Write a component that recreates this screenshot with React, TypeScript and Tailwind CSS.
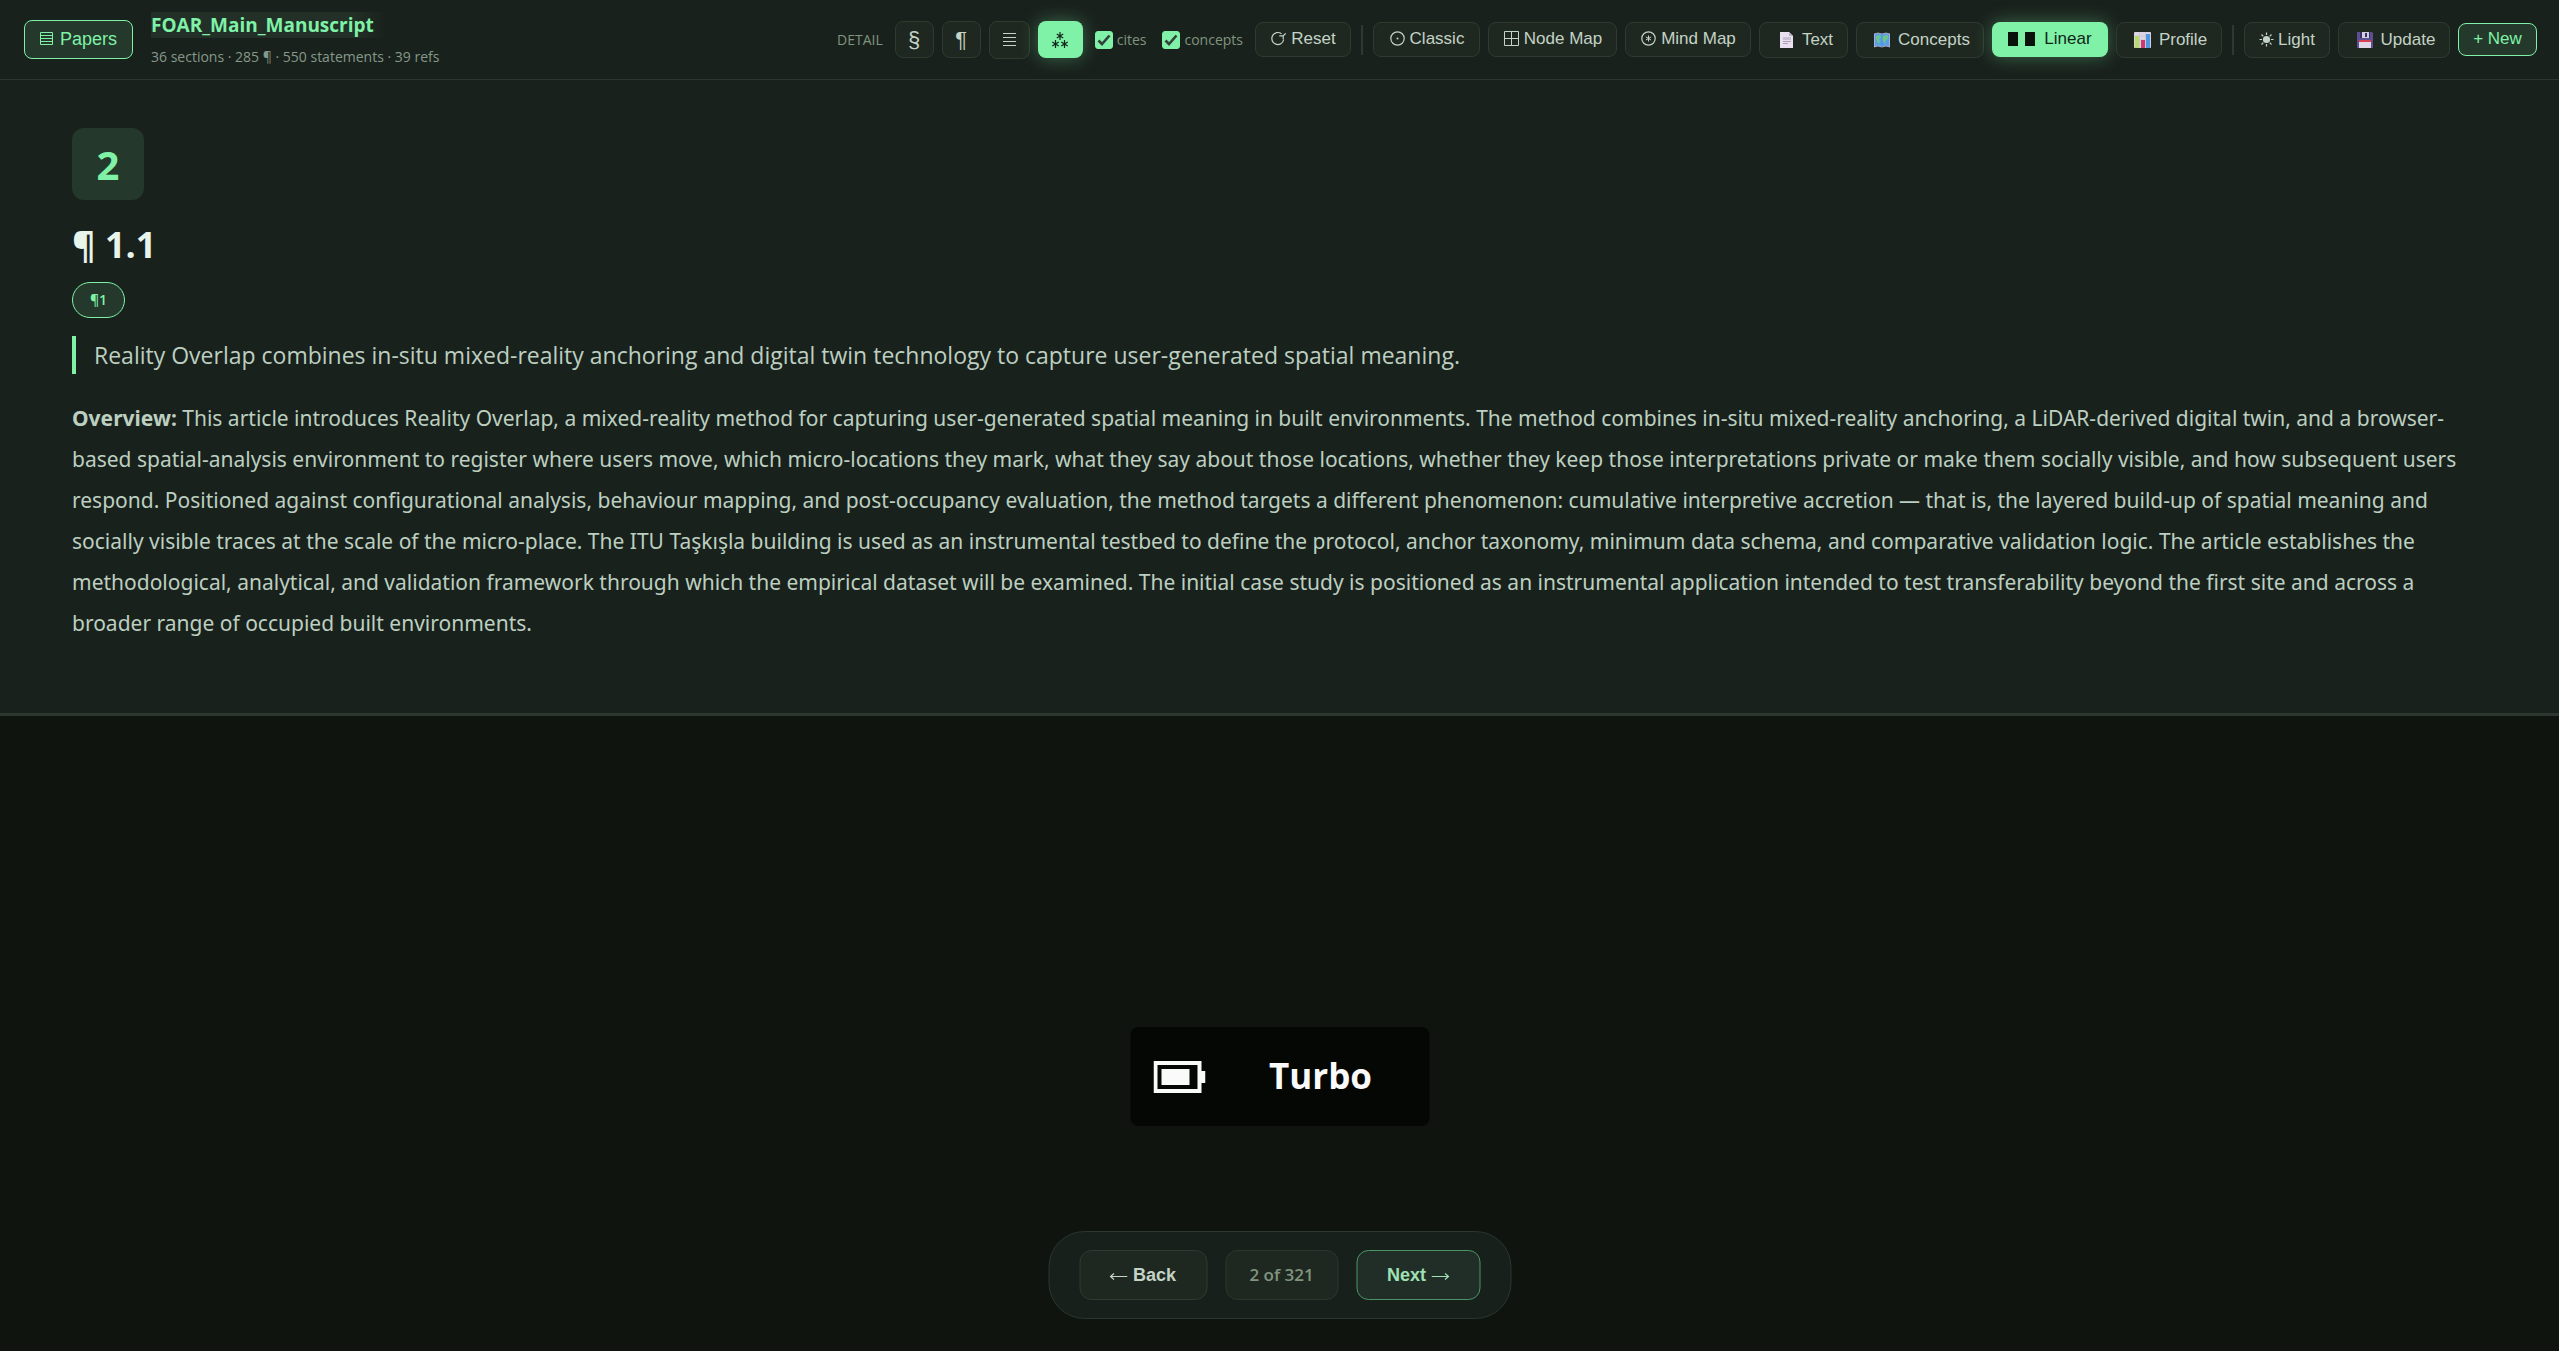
import type { ReactNode } from "react"

const FONT = "font-['Open_Sans','Noto_Sans',sans-serif]"
const ARIAL = "font-['Liberation_Sans',Arial,'DejaVu_Sans',sans-serif]"

const tool = `${ARIAL} flex shrink-0 items-center justify-center rounded-lg border border-[#2e3b31] bg-[#1f2820] text-[#c3d3c6] text-[17px] leading-5 whitespace-nowrap`

function Divider() {
    return <div className="mx-[2px] h-[30px] w-[2px] bg-[#2c3a31]" />
}

const RefreshIcon = () => (
    <svg width="17" height="17" viewBox="0 0 17 17" fill="none" stroke="currentColor" strokeWidth="1.2">
        <path d="M11.5 3.8A6 6 0 1 0 13.7 9.5" />
        <path d="M9.3 5.8H13.2V9.2M13.2 5.8L15.8 3.4" />
    </svg>
)

const ClassicIcon = () => (
    <svg width="17" height="17" viewBox="0 0 17 17" fill="none" stroke="currentColor" strokeWidth="1.2">
        <circle cx="8.5" cy="8.5" r="6.7" />
        <circle cx="8.5" cy="8.5" r="1" fill="currentColor" stroke="none" />
    </svg>
)

const GridIcon = () => (
    <svg width="17" height="17" viewBox="0 0 17 17" fill="none" stroke="currentColor" strokeWidth="1">
        <path d="M1.5 1.5H15.5V15.5H1.5ZM8.5 1.5V15.5M1.5 8.5H15.5" />
    </svg>
)

const MindIcon = () => (
    <svg width="17" height="17" viewBox="0 0 17 17" fill="none" stroke="currentColor" strokeWidth="1.2">
        <circle cx="8.5" cy="8.5" r="6.7" />
        <path d="M8.5 5.5V11.5M5.9 7L11.1 10M11.1 7L5.9 10" strokeWidth="1" />
    </svg>
)

const PageIcon = () => (
    <svg width="24" height="18" viewBox="-2 0 24 18">
        <path d="M4 1H13L17 5V17H4Z" fill="#e9e0f0" />
        <path d="M13 1L17 5H13Z" fill="#b9b0c4" />
        <path d="M7 6H15V9H7Z" fill="#c9c1d1" />
        <path d="M7 10.5H15M7 12.5H12" stroke="#a9a1b3" />
    </svg>
)

const MapIcon = () => (
    <svg width="24" height="18" viewBox="-2 0 24 18">
        <path d="M2 3L6 2L10 3L14 2L18 3V16L14 15L10 16L6 15L2 16Z" fill="#5b9fe6" />
        <path d="M2.5 3V16M17.5 3V16M2 3L6 2L10 3L14 2L18 3M2 16L6 15L10 16L14 15L18 16" fill="none" stroke="#b9b6d6" strokeWidth=".8" />
        <path d="M4 5L8 4L9 6L7 8L8 10L7 13L5 10L4 8ZM11 5L16 4L16 8L14 9L13 13L11 10L10 7Z" fill="#6cc58c" />
        <path d="M10 3V16" stroke="#2f6fb8" strokeOpacity=".4" strokeWidth=".7" />
    </svg>
)

const ChartIcon = () => (
    <svg width="24" height="18" viewBox="-2 0 24 18">
        <rect x="1" y="1" width="17" height="16" rx="1" fill="#dcd5e3" />
        <path d="M1 5H18M1 9H18M1 13H18M6.5 1V17M12.5 1V17" stroke="#c3bccc" strokeWidth=".6" />
        <rect x="2" y="5" width="4" height="12" fill="#b5dd64" />
        <rect x="8" y="9" width="4" height="8" fill="#d0396f" />
        <rect x="13" y="3" width="4" height="14" fill="#4f97e0" />
    </svg>
)

const SaveIcon = () => (
    <svg width="24" height="18" viewBox="-2 0 24 18">
        <path d="M2 1H17L18 2V17H2Z" fill="#5d4f94" />
        <rect x="5" y="1" width="10" height="6" fill="#3b3160" />
        <rect x="7" y="1" width="7" height="6" fill="#d5cee2" />
        <rect x="10" y="2" width="2" height="4" fill="#3b3160" />
        <rect x="4" y="9" width="12" height="8" fill="#e0d8e8" />
        <rect x="4" y="9" width="12" height="2" fill="#d8404f" />
    </svg>
)

const SunIcon = () => (
    <svg width="15" height="15" viewBox="0 0 15 15" stroke="currentColor" strokeWidth="1.2">
        <circle cx="7.5" cy="7.5" r="3.6" fill="currentColor" stroke="none" />
        <path d="M7.5 .5V3M7.5 12V14.5M.5 7.5H3M12 7.5H14.5M2.5 2.5L4.3 4.3M10.7 10.7L12.5 12.5M12.5 2.5L10.7 4.3M4.3 10.7L2.5 12.5" />
    </svg>
)

const BarsIcon = () => (
    <svg width="28" height="14" viewBox="0 0 28 14" fill="#09130c">
        <path d="M0 0H10V14H0ZM17 0H27V14H17Z" />
    </svg>
)

const LinesIcon = () => (
    <svg width="13" height="13" viewBox="0 0 13 13" stroke="currentColor">
        <path d="M0 .5H13M0 4.5H13M0 8.5H13M0 12.5H13" />
    </svg>
)

const AsterismIcon = () => (
    <svg width="18" height="18" viewBox="0 0 18 18" fill="none" stroke="currentColor" strokeWidth="1.2">
        {[[9, 5], [4.5, 13], [13.5, 13]].map(([x, y]) => (
            <path key={x} d={`M${x} ${y - 4}V${y + 4}M${x - 3.2} ${y - 2}L${x + 3.2} ${y + 2}M${x + 3.2} ${y - 2}L${x - 3.2} ${y + 2}`} />
        ))}
    </svg>
)

const PapersIcon = () => (
    <svg width="13" height="13" viewBox="0 0 13 13" fill="none" stroke="currentColor">
        <path d="M.5 .5H12.5V12.5H.5ZM.5 3.5H12.5M.5 6.5H12.5M.5 9.5H12.5" />
    </svg>
)

const BatteryIcon = () => (
    <svg width="52" height="32" viewBox="0 0 52 32" fill="#fafafa">
        <path fillRule="evenodd" d="M0 0H48V10H52V22H48V32H0ZM4 4V28H44V4Z" />
        <rect x="8" y="8" width="28" height="16" />
    </svg>
)

const Arrow = ({ flip }: { flip?: boolean }) => (
    <svg width="18" height="9" viewBox="0 0 18 9" fill="none" stroke="currentColor" strokeWidth="1.2" className={flip ? "mt-[3px] rotate-180" : "mt-[3px]"}>
        <path d="M0 4.5H17M13.5 1.5L17 4.5L13.5 7.5" />
    </svg>
)

function Toggle({ label }: { label: string }) {
    return (
        <label className="flex items-center gap-1 text-sm text-[#80947f]">
            <span className="grid">
                <input type="checkbox" defaultChecked className="peer col-start-1 row-start-1 h-[18px] w-[18px] appearance-none rounded-[3px] border border-[#80947f] checked:border-[#7ff2a7] checked:bg-[#7ff2a7]" />
                <svg width="14" height="14" viewBox="0 0 14 14" fill="none" stroke="#34423a" strokeWidth="2.6" className="pointer-events-none invisible col-start-1 row-start-1 place-self-center peer-checked:visible">
                    <path d="M1.5 7.5L5 11L12.5 2.5" />
                </svg>
            </span>
            {label}
        </label>
    )
}

function ToolButton({ icon, children, className }: { icon: ReactNode, children: ReactNode, className: string }) {
    return (
        <button type="button" className={`${tool} gap-1 ${className}`}>
            {icon}
            <span>{children}</span>
        </button>
    )
}

export default function App() {
    return (
        <div className={`${FONT} relative flex min-h-screen flex-col bg-[#0f140f]`}>
            <header className="flex h-20 items-center border-b border-[#2b372f] bg-[#19211c] pr-[22px] pl-6">
                <button type="button" className={`${ARIAL} flex h-[39px] w-[109px] shrink-0 items-center justify-center gap-[7px] rounded-lg border border-[#7ff2a7] bg-[#24382c] pb-[2px] text-lg text-[#7ff2a7]`}>
                    <PapersIcon />
                    Papers
                </button>
                <div className="ml-[18px]">
                    <h1 className="w-fit bg-linear-to-r from-[#223027] from-85% to-[#22302700] pr-3 text-[19px] leading-[26px] font-bold text-[#7ff2a7]">FOAR_Main_Manuscript</h1>
                    <p className="mt-[9px] text-sm leading-5 whitespace-nowrap text-[#85998a]">36 sections · 285 ¶ · 550 statements · 39 refs</p>
                </div>
                <div className="ml-auto flex items-center gap-2">
                    <span className="mr-1 text-sm text-[#80947f]">DETAIL</span>
                    <button type="button" className={`${tool} h-[37px] w-[39px]`}><span className="text-[22px]">§</span></button>
                    <button type="button" className={`${tool} h-[37px] w-[39px]`}><span className="text-[22px]">¶</span></button>
                    <button type="button" aria-label="Statements" className={`${tool} h-[38px] w-[41px]`}><LinesIcon /></button>
                    <button type="button" aria-label="All" className="flex h-[37px] w-[45px] items-center justify-center rounded-lg bg-[#7ff2a7] text-[#10261a] shadow-[0_0_18px_rgba(127,242,167,0.35)]"><AsterismIcon /></button>
                    <div className="mx-1 flex gap-4">
                        <Toggle label="cites" />
                        <Toggle label="concepts" />
                    </div>
                    <ToolButton icon={<RefreshIcon />} className="h-[35px] w-24 pb-[2px]">Reset</ToolButton>
                    <Divider />
                    <ToolButton icon={<ClassicIcon />} className="h-[35px] w-[107px] pb-[2px]">Classic</ToolButton>
                    <ToolButton icon={<GridIcon />} className="h-[35px] w-[129px] pb-[2px]">Node Map</ToolButton>
                    <ToolButton icon={<MindIcon />} className="h-[35px] w-[126px] pb-[2px]">Mind Map</ToolButton>
                    <ToolButton icon={<PageIcon />} className="h-9 w-[89px]">Text</ToolButton>
                    <ToolButton icon={<MapIcon />} className="h-9 w-32">Concepts</ToolButton>
                    <button type="button" className={`${ARIAL} flex h-[35px] w-[116px] shrink-0 items-center justify-center gap-2 rounded-lg bg-[#7ff2a7] pb-[2px] text-[17px] leading-5 text-[#10261a] shadow-[0_0_18px_rgba(127,242,167,0.35)]`}>
                        <BarsIcon />
                        Linear
                    </button>
                    <ToolButton icon={<ChartIcon />} className="h-9 w-[106px]">Profile</ToolButton>
                    <Divider />
                    <ToolButton icon={<SunIcon />} className="h-9 w-[86px]">Light</ToolButton>
                    <ToolButton icon={<SaveIcon />} className="h-9 w-28">Update</ToolButton>
                    <button type="button" className={`${ARIAL} h-[33px] w-[79px] shrink-0 rounded-lg border border-[#7ff2a7] bg-[#24382c] pb-[2px] text-[17px] leading-5 text-[#7ff2a7]`}>+ New</button>
                </div>
            </header>

            <main className="border-b-[3px] border-[#2b372f] bg-[#19211c] px-[72px] pt-12 pb-[69px]">
                <div className="flex h-[72px] w-[72px] items-center justify-center rounded-xl bg-[#24382c] pt-[2px] text-[40px] font-bold text-[#7ff2a7]">2</div>
                <h2 className="mt-[18px] text-4xl leading-[54px] font-bold text-[#e8f3ea]">¶ 1.1</h2>
                <div className="mt-[10px] flex h-9 w-[53px] items-center justify-center rounded-full border border-[#7ff2a7] bg-[#24382c] text-sm font-semibold text-[#7ff2a7]">¶1</div>
                <blockquote className="mt-[18px] border-l-4 border-[#7ff2a7] pl-[18px] text-[23px] leading-[38px] text-[#bccfc0]">Reality Overlap combines in-situ mixed-reality anchoring and digital twin technology to capture user-generated spatial meaning.</blockquote>
                <p className="mt-6 font-['Noto_Sans',sans-serif] text-[21px] leading-[41px] text-[#bccfc0]"><strong>Overview:</strong> This article introduces Reality Overlap, a mixed-reality method for capturing user-generated spatial meaning in built environments. The method combines in-situ mixed-reality anchoring, a LiDAR-derived digital twin, and a browser-based spatial-analysis environment to register where users move, which micro-locations they mark, what they say about those locations, whether they keep those interpretations private or make them socially visible, and how subsequent users respond. Positioned against configurational analysis, behaviour mapping, and post-occupancy evaluation, the method targets a different phenomenon: cumulative interpretive accretion — that is, the layered build-up of spatial meaning and socially visible traces at the scale of the micro-place. The ITU Taşkışla building is used as an instrumental testbed to define the protocol, anchor taxonomy, minimum data schema, and comparative validation logic. The article establishes the methodological, analytical, and validation framework through which the empirical dataset will be examined. The initial case study is positioned as an instrumental application intended to test transferability beyond the first site and across a broader range of occupied built environments.</p>
            </main>

            {/* power mode overlay */}
            <div className="fixed bottom-[225px] left-1/2 flex h-[99px] w-[299px] -translate-x-1/2 items-center rounded-lg bg-[#050704] pl-[23px]">
                <BatteryIcon />
                <span className="ml-16 text-[35px] font-bold text-[#fafafa]">Turbo</span>
            </div>

            <nav className="fixed bottom-8 left-1/2 flex -translate-x-1/2 items-center gap-[18px] rounded-[36px] border border-[#2b372f] bg-[#18201c] px-[30px] py-[18px]">
                <button type="button" className={`${ARIAL} flex h-[50px] w-32 items-center justify-center gap-[5px] rounded-xl border border-[#2e3b31] bg-[#1f2820] text-lg font-bold text-[#c3d3c6]`}>
                    <Arrow flip />
                    Back
                </button>
                <span className="flex h-[50px] w-[113px] items-center justify-center rounded-xl border border-[#2b372d] bg-[#1f2820] text-[17px] font-semibold text-[#80947f]">2 of 321</span>
                <button type="button" className={`${ARIAL} flex h-[50px] w-[124px] items-center justify-center gap-[5px] rounded-xl border border-[#4b9468] bg-[#212e27] text-lg font-bold text-[#9fe0b5]`}>
                    Next
                    <Arrow />
                </button>
            </nav>
        </div>
    )
}
